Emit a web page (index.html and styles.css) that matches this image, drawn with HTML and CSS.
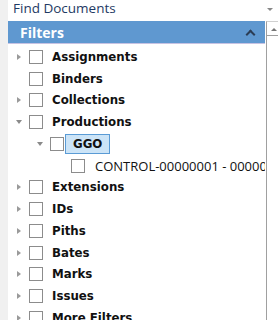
FILE: index.html
```html
<!DOCTYPE html>
<html lang="en">
<head>
    <meta charset="UTF-8">
    <title>Find Documents</title>
    <link rel="stylesheet" href="styles.css">
</head>
<body>
    <div class="main">
        <div class="title">
            <span>Find Documents</span>
            <span class="drop"></span>
        </div>
        <div class="panel">
            <div class="content">
                <div class="bar">
                    <span>Filters</span>
                    <span class="caret"></span>
                </div>
                <ul class="tree">
                    <li class="node"><span class="arrow closed"></span><span class="box"></span><span class="label">Assignments</span></li>
                    <li class="node"><span class="arrow"></span><span class="box"></span><span class="label">Binders</span></li>
                    <li class="node"><span class="arrow closed"></span><span class="box"></span><span class="label">Collections</span></li>
                    <li class="node"><span class="arrow open"></span><span class="box"></span><span class="label">Productions</span></li>
                    <li class="node lvl1"><span class="arrow open"></span><span class="box"></span><span class="label selected">GGO</span></li>
                    <li class="node lvl2"><span class="box"></span><span class="label plain">CONTROL-00000001 - 00000001</span></li>
                    <li class="node"><span class="arrow closed"></span><span class="box"></span><span class="label">Extensions</span></li>
                    <li class="node"><span class="arrow closed"></span><span class="box"></span><span class="label">IDs</span></li>
                    <li class="node"><span class="arrow closed"></span><span class="box"></span><span class="label">Piths</span></li>
                    <li class="node"><span class="arrow closed"></span><span class="box"></span><span class="label">Bates</span></li>
                    <li class="node"><span class="arrow closed"></span><span class="box"></span><span class="label">Marks</span></li>
                    <li class="node"><span class="arrow closed"></span><span class="box"></span><span class="label">Issues</span></li>
                    <li class="node"><span class="arrow closed"></span><span class="box"></span><span class="label">More Filters</span></li>
                </ul>
            </div>
            <div class="scroll">
                <div class="scroll-up"></div>
            </div>
        </div>
    </div>
</body>
</html>
```

FILE: styles.css
```css
body, html {
    margin: 0;
    padding: 0;
    height: 100%;
    overflow: hidden;
}

body {
    background: #f0f0f0;
    font-family: 'Open Sans', sans-serif;
}

.main {
    margin-left: 8px;
    height: 100%;
    background: #fff;
    display: flex;
    flex-direction: column;
}

.title {
    height: 21px;
    display: flex;
    align-items: flex-start;
    justify-content: space-between;
    padding-left: 5px;
    font-size: 13.5px;
    line-height: 17px;
    color: #1e3a64;
}

.drop {
    width: 0;
    height: 0;
    border-left: 3px solid transparent;
    border-right: 3px solid transparent;
    border-top: 3px solid #888;
    margin-right: 5px;
    margin-top: 8px;
}

.panel {
    flex: 1;
    display: flex;
    min-height: 0;
}

.content {
    flex: 1;
    min-width: 0;
    overflow: hidden;
}

.bar {
    height: 22px;
    background: #5f98d0;
    border-bottom: 1px solid #c7c3e3;
    display: flex;
    align-items: center;
    justify-content: space-between;
    padding-left: 12px;
    padding-right: 11px;
    color: #fff;
    font-weight: bold;
    font-size: 14px;
}

.caret {
    width: 5px;
    height: 5px;
    border-left: 2px solid #2b3d55;
    border-top: 2px solid #2b3d55;
    transform: rotate(45deg);
    margin-top: 5px;
}

.tree {
    list-style: none;
    margin: 0;
    padding: 2px 0 0 0;
}

.node {
    height: 21.75px;
    display: flex;
    align-items: center;
    white-space: nowrap;
}

.lvl1 {
    padding-left: 21px;
}

.lvl2 {
    padding-left: 63px;
}

.arrow {
    width: 12px;
    height: 10px;
    flex: none;
    position: relative;
}

.arrow.closed::before {
    content: '';
    position: absolute;
    left: 9px;
    top: 2px;
    border-top: 3px solid transparent;
    border-bottom: 3px solid transparent;
    border-left: 4px solid #9a9a9a;
}

.arrow.open::before {
    content: '';
    position: absolute;
    left: 8px;
    top: 3px;
    border-left: 3px solid transparent;
    border-right: 3px solid transparent;
    border-top: 4px solid #8a8a8a;
}

.box {
    width: 12px;
    height: 12px;
    border: 1px solid #8c8c8c;
    background: #fff;
    flex: none;
    margin-left: 9px;
}

.lvl2 .box {
    margin-left: 0;
}

.label {
    margin-left: 9px;
    font-family: 'DejaVu Sans', sans-serif;
    font-weight: bold;
    font-size: 11.8px;
    color: #111;
}

.label.selected {
    margin-left: 1px;
    background: #cce4f7;
    border: 1px solid #5a9bd5;
    padding: 2px 7px 2px 7px;
    line-height: 14px;
}

.label.plain {
    font-family: 'Open Sans', sans-serif;
    font-weight: normal;
    font-size: 13px;
    margin-left: 10px;
}

.scroll {
    width: 11px;
    margin-left: 1px;
    border-left: 1px solid #a0a0a0;
    border-top: 1px solid #d0d0d0;
}

.scroll-up {
    height: 13px;
    border-bottom: 1px solid #a0a0a0;
    position: relative;
}

.scroll-up::before {
    content: '';
    position: absolute;
    left: 4px;
    top: 6px;
    border-left: 3px solid transparent;
    border-right: 3px solid transparent;
    border-bottom: 3px solid #777;
}
```
